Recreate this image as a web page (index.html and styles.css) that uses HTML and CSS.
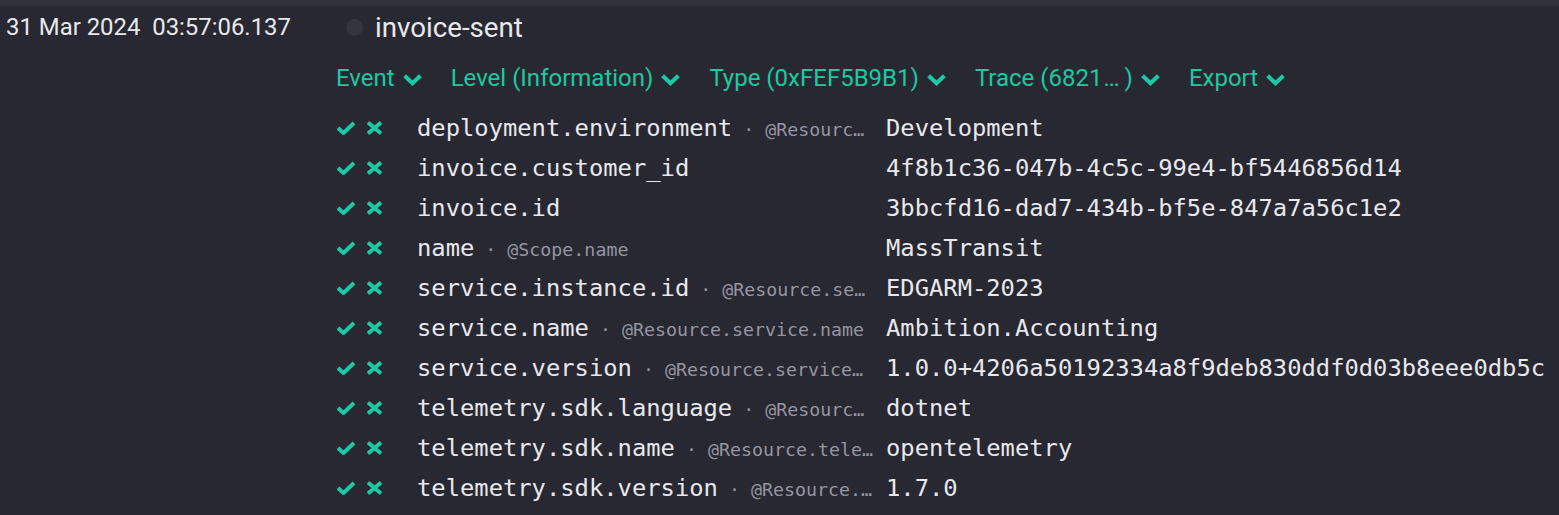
FILE: index.html
```html
<!DOCTYPE html>
<html>
<head>
<meta charset="utf-8">
<link rel="stylesheet" href="styles.css">
</head>
<body>
<div class="strip"></div>
<div class="event">
  <div class="event-head">
    <div class="ts">31 Mar 2024&nbsp;&nbsp;03:57:06.137</div>
    <span class="dot"></span>
    <div class="title">invoice-sent</div>
  </div>
  <div class="details">
    <div class="links">
      <span class="link">Event<svg class="chev" viewBox="0 0 20 12"><path d="M2.5 2.5 L10 9.5 L17.5 2.5"/></svg></span>
      <span class="link">Level (Information)<svg class="chev" viewBox="0 0 20 12"><path d="M2.5 2.5 L10 9.5 L17.5 2.5"/></svg></span>
      <span class="link">Type (0xFEF5B9B1)<svg class="chev" viewBox="0 0 20 12"><path d="M2.5 2.5 L10 9.5 L17.5 2.5"/></svg></span>
      <span class="link">Trace (6821<span class="ell">…</span>)<svg class="chev" viewBox="0 0 20 12"><path d="M2.5 2.5 L10 9.5 L17.5 2.5"/></svg></span>
      <span class="link">Export<svg class="chev" viewBox="0 0 20 12"><path d="M2.5 2.5 L10 9.5 L17.5 2.5"/></svg></span>
    </div>
    <div class="props">
      <div class="row">
        <div class="acts"><svg class="ok" viewBox="0 0 20 14"><path d="M2 7 L7.5 12 L18 2"/></svg><svg class="no" viewBox="0 0 17 14"><path d="M2 1.5 L15 12.5 M15 1.5 L2 12.5"/></svg></div>
        <div class="key"><span class="k">deployment.environment</span><span class="meta"> · @Resource.deployment.environment</span></div>
        <div class="val">Development</div>
      </div>
      <div class="row">
        <div class="acts"><svg class="ok" viewBox="0 0 20 14"><path d="M2 7 L7.5 12 L18 2"/></svg><svg class="no" viewBox="0 0 17 14"><path d="M2 1.5 L15 12.5 M15 1.5 L2 12.5"/></svg></div>
        <div class="key"><span class="k">invoice.customer_id</span></div>
        <div class="val">4f8b1c36-047b-4c5c-99e4-bf5446856d14</div>
      </div>
      <div class="row">
        <div class="acts"><svg class="ok" viewBox="0 0 20 14"><path d="M2 7 L7.5 12 L18 2"/></svg><svg class="no" viewBox="0 0 17 14"><path d="M2 1.5 L15 12.5 M15 1.5 L2 12.5"/></svg></div>
        <div class="key"><span class="k">invoice.id</span></div>
        <div class="val">3bbcfd16-dad7-434b-bf5e-847a7a56c1e2</div>
      </div>
      <div class="row">
        <div class="acts"><svg class="ok" viewBox="0 0 20 14"><path d="M2 7 L7.5 12 L18 2"/></svg><svg class="no" viewBox="0 0 17 14"><path d="M2 1.5 L15 12.5 M15 1.5 L2 12.5"/></svg></div>
        <div class="key"><span class="k">name</span><span class="meta"> · @Scope.name</span></div>
        <div class="val">MassTransit</div>
      </div>
      <div class="row">
        <div class="acts"><svg class="ok" viewBox="0 0 20 14"><path d="M2 7 L7.5 12 L18 2"/></svg><svg class="no" viewBox="0 0 17 14"><path d="M2 1.5 L15 12.5 M15 1.5 L2 12.5"/></svg></div>
        <div class="key"><span class="k">service.instance.id</span><span class="meta"> · @Resource.service.instance.id</span></div>
        <div class="val">EDGARM-2023</div>
      </div>
      <div class="row">
        <div class="acts"><svg class="ok" viewBox="0 0 20 14"><path d="M2 7 L7.5 12 L18 2"/></svg><svg class="no" viewBox="0 0 17 14"><path d="M2 1.5 L15 12.5 M15 1.5 L2 12.5"/></svg></div>
        <div class="key"><span class="k">service.name</span><span class="meta"> · @Resource.service.name</span></div>
        <div class="val">Ambition.Accounting</div>
      </div>
      <div class="row">
        <div class="acts"><svg class="ok" viewBox="0 0 20 14"><path d="M2 7 L7.5 12 L18 2"/></svg><svg class="no" viewBox="0 0 17 14"><path d="M2 1.5 L15 12.5 M15 1.5 L2 12.5"/></svg></div>
        <div class="key"><span class="k">service.version</span><span class="meta"> · @Resource.service.version</span></div>
        <div class="val">1.0.0+4206a50192334a8f9deb830ddf0d03b8eee0db5c</div>
      </div>
      <div class="row">
        <div class="acts"><svg class="ok" viewBox="0 0 20 14"><path d="M2 7 L7.5 12 L18 2"/></svg><svg class="no" viewBox="0 0 17 14"><path d="M2 1.5 L15 12.5 M15 1.5 L2 12.5"/></svg></div>
        <div class="key"><span class="k">telemetry.sdk.language</span><span class="meta"> · @Resource.telemetry.sdk.language</span></div>
        <div class="val">dotnet</div>
      </div>
      <div class="row">
        <div class="acts"><svg class="ok" viewBox="0 0 20 14"><path d="M2 7 L7.5 12 L18 2"/></svg><svg class="no" viewBox="0 0 17 14"><path d="M2 1.5 L15 12.5 M15 1.5 L2 12.5"/></svg></div>
        <div class="key"><span class="k">telemetry.sdk.name</span><span class="meta"> · @Resource.telemetry.sdk.name</span></div>
        <div class="val">opentelemetry</div>
      </div>
      <div class="row">
        <div class="acts"><svg class="ok" viewBox="0 0 20 14"><path d="M2 7 L7.5 12 L18 2"/></svg><svg class="no" viewBox="0 0 17 14"><path d="M2 1.5 L15 12.5 M15 1.5 L2 12.5"/></svg></div>
        <div class="key"><span class="k">telemetry.sdk.version</span><span class="meta"> · @Resource.telemetry.sdk.version</span></div>
        <div class="val">1.7.0</div>
      </div>
    </div>
  </div>
</div>
</body>
</html>
```
FILE: styles.css
```css
html, body {
  margin: 0;
  padding: 0;
  background: #282832;
  color: #e8e8ec;
  font-family: Roboto, "Liberation Sans", sans-serif;
  overflow: hidden;
}
.strip {
  height: 6px;
  background: #31313c;
}
.event-head {
  display: flex;
  align-items: center;
  height: 42px;
}
.ts {
  width: 340px;
  padding-left: 6px;
  box-sizing: border-box;
  font-size: 23.9px;
  white-space: nowrap;
}
.dot {
  width: 17px;
  height: 17px;
  border-radius: 50%;
  background: #35353f;
  margin-left: 6px;
}
.title {
  margin-left: 12px;
  font-size: 27.7px;
}
.details {
  padding-left: 336px;
}
.links {
  display: flex;
  align-items: center;
  height: 60px;
  gap: 28px;
}
.link {
  display: flex;
  align-items: center;
  color: #1ec8a0;
  font-size: 24px;
  white-space: nowrap;
}
.ell {
  padding: 0 5px 0 1px;
}
.chev {
  width: 21px;
  height: 13px;
  margin-left: 7px;
  margin-top: 2px;
}
.chev path {
  fill: none;
  stroke: #1ec8a0;
  stroke-width: 4;
}
.row {
  display: flex;
  align-items: center;
  height: 40px;
}
.acts {
  display: flex;
  align-items: center;
  gap: 10px;
  width: 81px;
  flex: none;
}
.ok {
  width: 20px;
  height: 14px;
}
.no {
  width: 17px;
  height: 14px;
}
.ok path, .no path {
  fill: none;
  stroke: #1ec8a0;
  stroke-width: 4;
}
.key {
  display: flex;
  align-items: baseline;
  width: 457px;
  flex: none;
  overflow: hidden;
  white-space: nowrap;
  font-family: "DejaVu Sans Mono", monospace;
}
.k {
  font-size: 23.8px;
  flex-shrink: 0;
}
.meta {
  font-size: 18.3px;
  color: #9595a0;
  overflow: hidden;
  text-overflow: ellipsis;
  white-space: pre;
  min-width: 0;
}
.val {
  margin-left: 12px;
  font-family: "DejaVu Sans Mono", monospace;
  font-size: 23.8px;
  white-space: nowrap;
}
```
